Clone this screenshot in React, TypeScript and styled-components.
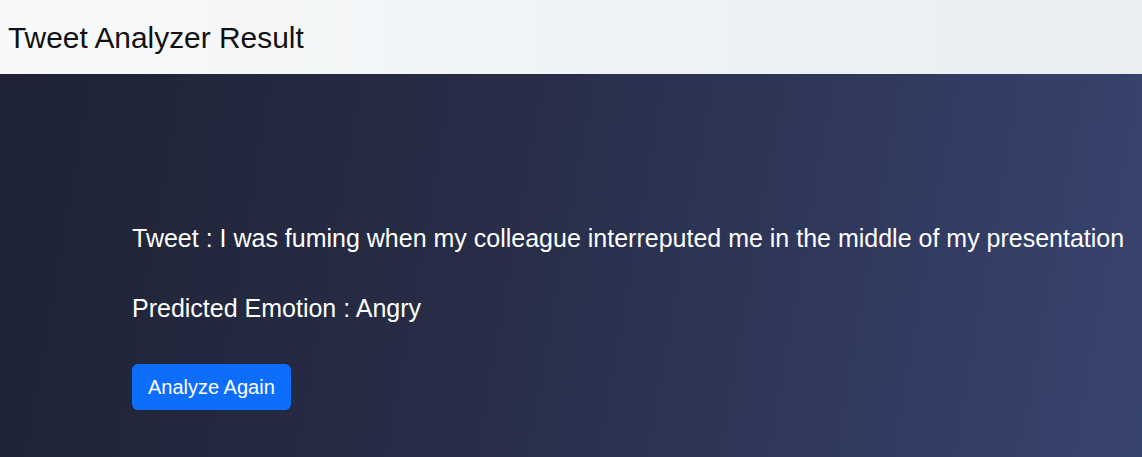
import React from "react";
import styled, { createGlobalStyle } from "styled-components";

const Global = createGlobalStyle`
  html, body { margin: 0; padding: 0; height: 100%; }
  body { font-family: "Liberation Sans", Arial, sans-serif; background: #1f2437; }
  #root { min-height: 100vh; display: flex; flex-direction: column; }
`;

const Header = styled.header`
  height: 74px;
  display: flex;
  align-items: center;
  padding: 0 8px;
  background: linear-gradient(90deg, #f8f9fa 0%, #e9eef2 100%);
  box-sizing: border-box;
`;

const Title = styled.h1`
  margin: 0;
  font-size: 29.9px;
  font-weight: 400;
  color: #111;
  line-height: 1;
  padding-top: 2px;
`;

const Main = styled.main`
  flex: 1;
  background: linear-gradient(100deg, #1e2234 0%, #282e49 45%, #384470 100%);
  padding: 149px 0 0 132px;
  display: flex;
  flex-direction: column;
  align-items: flex-start;
`;

const Line = styled.p<{ $gap: number }>`
  margin: 0 0 ${(p) => p.$gap}px 0;
  color: #ffffff;
  font-size: 25px;
  line-height: 30px;
  white-space: nowrap;
`;

const Button = styled.button`
  background: #0d6efd;
  color: #fff;
  border: none;
  border-radius: 6px;
  font-family: inherit;
  font-size: 20px;
  padding: 0 16px;
  height: 46px;
  cursor: pointer;
`;

export default function App() {
  return (
    <>
      <Global />
      <Header>
        <Title>Tweet Analyzer Result</Title>
      </Header>
      <Main>
        <Line $gap={40}>Tweet : I was fuming when my colleague interreputed me in the middle of my presentation</Line>
        <Line $gap={41}>Predicted Emotion : Angry</Line>
        <Button>Analyze Again</Button>
      </Main>
    </>
  );
}
